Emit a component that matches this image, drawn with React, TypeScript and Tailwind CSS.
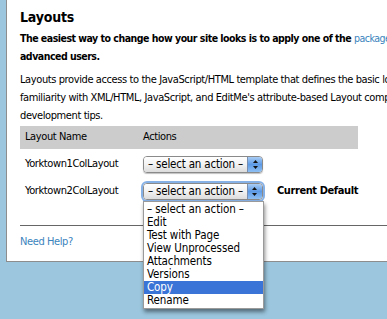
import React from "react";

const font = { fontFamily: '"DejaVu Sans Condensed", "DejaVu Sans", Verdana, sans-serif' };

function Arrows() {
  return (
    <svg width="7" height="11" viewBox="0 0 7 11">
      <path d="M3.5 1 L6 4 L1 4 Z" fill="#111" />
      <path d="M3.5 10 L6 7 L1 7 Z" fill="#111" />
    </svg>
  );
}

function FakeSelect({ focused }: { focused?: boolean }) {
  return (
    <div
      className={
        "flex h-[17px] w-[120px] items-stretch overflow-hidden rounded-[4px] border border-[#8a8a8a] " +
        (focused ? "shadow-[0_0_0_2px_#86b1e6]" : "shadow-[0_1px_1px_rgba(0,0,0,0.25)]")
      }
    >
      <div className="flex flex-1 items-center justify-center whitespace-nowrap bg-gradient-to-b from-white via-[#f2f2f2] to-[#dcdcdc] text-[11.5px] leading-none tracking-[-0.2px] text-black">
        – select an action –
      </div>
      <div className="flex w-[15px] items-center justify-center border-l border-[#7a8fb0] bg-gradient-to-b from-[#a9cdf5] via-[#5d9ae5] to-[#8fc0f3]">
        <Arrows />
      </div>
    </div>
  );
}

export default function App() {
  const items = [
    "– select an action –",
    "Edit",
    "Test with Page",
    "View Unprocessed",
    "Attachments",
    "Versions",
    "Copy",
    "Rename",
  ];
  return (
    <div className="relative h-[319px] w-[387px] overflow-hidden bg-[#9bc6de]" style={font}>
      <div className="ml-[6px] h-[262px] w-[460px] border-b border-l border-[#8d8d8d] bg-white pl-[13px] pt-[8px] text-[11px] tracking-[-0.4px] text-black">
        <h2 className="text-[14px] font-bold leading-[18px] tracking-[-0.2px]">Layouts</h2>
        <p className="mt-[3px] whitespace-nowrap text-[10.5px] font-bold leading-[18px] tracking-[-0.5px]">
          The easiest way to change how your site looks is to apply one of the{" "}
          <span className="font-normal text-[#3b84bd]">packaged layouts</span>
          <br />
          advanced users.
        </p>
        <p className="mt-[6px] whitespace-nowrap leading-[18px]">
          Layouts provide access to the JavaScript/HTML template that defines the basic look and feel of your site. This
          <br />
          familiarity with XML/HTML, JavaScript, and EditMe's attribute-based Layout components. See
          <br />
          development tips.
        </p>
        <div className="mt-[1px] w-[338px]">
          <div className="flex h-[23px] items-center bg-[#cccccc]">
            <div className="w-[123px] pl-[5px]">Layout Name</div>
            <div>Actions</div>
          </div>
          <div className="flex h-[29px] items-center pt-[2px]">
            <div className="w-[123px] pl-[5px]">Yorktown1ColLayout</div>
            <FakeSelect />
          </div>
          <div className="flex h-[27px] items-center">
            <div className="w-[123px] pl-[5px]">Yorktown2ColLayout</div>
            <div className="relative">
              <FakeSelect focused />
              <div className="absolute left-0 top-[18px] z-10 w-[121px] border border-[#9a9a9a] bg-white py-[1px] shadow-[1px_3px_4px_rgba(0,0,0,0.45)]">
                {items.map((it) => (
                  <div
                    key={it}
                    className={
                      "h-[13px] whitespace-nowrap pl-[3px] text-[11.5px] leading-[13px] tracking-[-0.1px] " +
                      (it === "Copy" ? "bg-[#3a74d6] text-white" : "text-black")
                    }
                  >
                    {it}
                  </div>
                ))}
              </div>
            </div>
            <div className="ml-[14px] whitespace-nowrap font-bold">Current Default</div>
          </div>
        </div>
        <div className="mt-[20px] h-px w-[440px] bg-[#666]" />
        <div className="mt-[8px] text-[#3b84bd]">Need Help?</div>
      </div>
    </div>
  );
}
